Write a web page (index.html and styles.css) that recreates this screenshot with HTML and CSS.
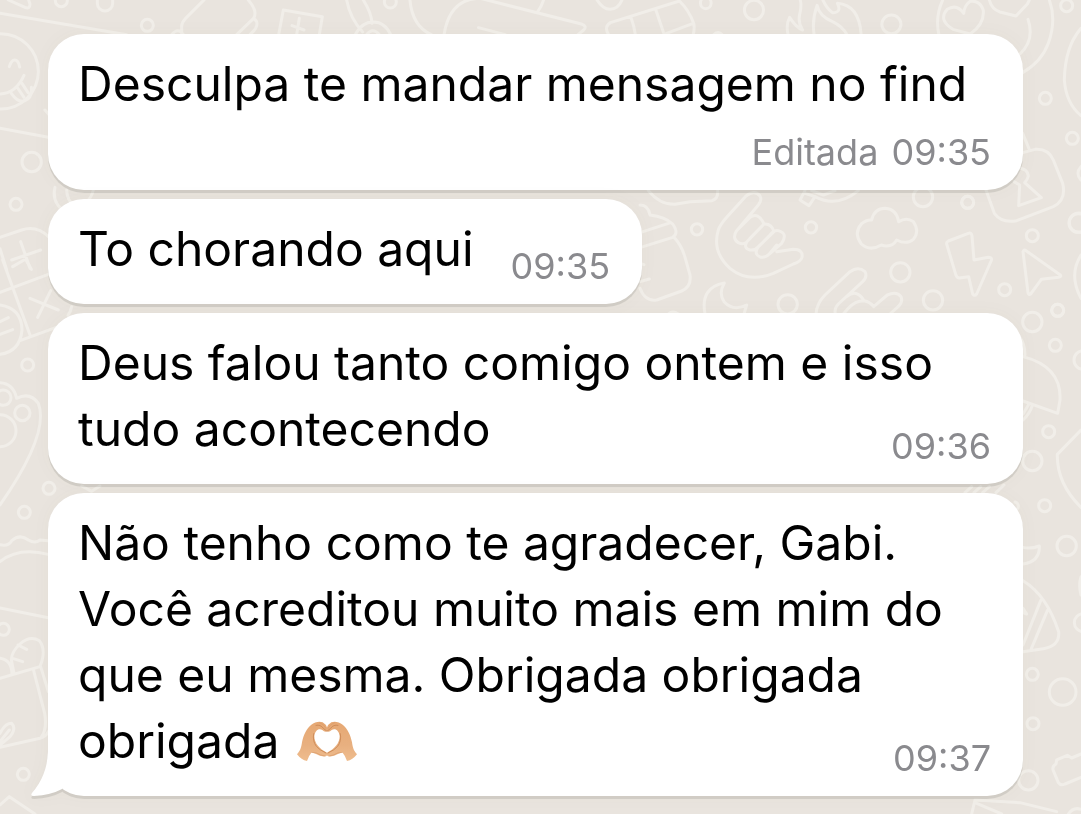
FILE: index.html
```html
<!DOCTYPE html>
<html lang="pt-BR">
<head>
    <meta charset="UTF-8">
    <meta name="viewport" content="width=device-width, initial-scale=1.0">
    <title>Conversa</title>
    <link rel="stylesheet" href="styles.css">
</head>
<body>
    <svg class="wallpaper" width="1081" height="814" viewBox="0 0 1081 814" aria-hidden="true">
        <!-- top left -->
        <g transform="scale(.33333)">
            <path d="M25 0L75 22Q90 28 90 12L86 0M0 40L380 104M0 385L145 412"/>
            <circle cx="184" cy="2" r="18"/>
            <path d="M292 0V10A23 23 0 0 0 338 10V0"/>
            <circle cx="442" cy="76" r="18"/>
            <circle cx="2" cy="214" r="113"/>
            <path d="M28 200Q34 180 44 180Q55 180 59 201M0 282Q48 280 72 226M34 280Q55 310 75 302Q98 292 94 262M53 264L72 292M66 250L84 278M135 330L148 345"/>
            <circle cx="95" cy="486" r="29"/>
            <circle cx="48" cy="613" r="18"/>
            <path d="M165 562Q155 600 185 628M200 570Q200 600 225 620M280 570Q275 590 265 600"/>
            <path d="M545 104V78Q545 68 556 56L612 0M745 0Q775 35 760 56L710 104M762 56Q780 68 762 92L750 104M515 104Q535 80 550 104M836 104L850 30L967 50L958 104M898 55L890 104M876 77L912 90M1040 0Q1050 55 1088 96M1090 0Q1115 40 1116 70M1066 104Q1085 66 1120 66Q1155 66 1172 104M1100 104Q1118 80 1138 104"/>
            <circle cx="1171" cy="6" r="18"/>
            <path d="M0 712L65 690Q110 675 148 712M0 746L20 810M35 780L122 750M62 725L90 805"/>
        </g>
        <!-- top middle -->
        <g transform="translate(400 0) scale(.3827 .33333)">
            <path d="M26 0Q32 78 82 104M115 104Q130 -5 210 -5L474 72Q490 78 480 90L465 104M375 0Q370 20 358 38M205 83L275 104M515 0Q530 28 549 28Q570 28 580 0M545 104Q532 80 550 68L730 3Q755 30 768 72Q770 90 766 104M603 50Q612 78 615 104M668 28L688 96M688 104L766 70M820 104Q832 92 842 104M1046 0Q1050 20 1044 45Q1040 70 1052 90Q1035 82 1018 52Q1008 74 1014 104M1082 104Q1076 60 1090 16Q1095 48 1130 65Q1155 78 1168 104M1105 0Q1115 25 1130 38Q1155 38 1143 10Q1200 15 1205 104M1418 0Q1398 50 1408 104M1473 40Q1455 10 1430 28Q1405 60 1445 88L1490 102Q1528 72 1524 30Q1515 0 1490 4Q1475 15 1473 40"/>
            <ellipse cx="799" cy="9" rx="14" ry="17"/>
            <ellipse cx="925" cy="30" rx="25" ry="29"/>
            <ellipse cx="1284" cy="73" rx="25" ry="28"/>
        </g>
        <!-- top right -->
        <g transform="translate(940 0) scale(.33333)">
            <path d="M148 0Q155 28 180 36L228 48L262 12L268 0M328 0Q350 60 325 130Q305 185 248 218M264 58Q285 120 240 162M423 85Q375 140 373 240Q378 310 423 347"/>
            <circle cx="380" cy="17" r="18"/>
            <circle cx="316" cy="295" r="18"/>
            <circle cx="397" cy="415" r="18"/>
            <circle cx="440" cy="520" r="26"/>
            <circle cx="417" cy="668" r="29"/>
            <circle cx="277" cy="707" r="18"/>
            <circle cx="83" cy="607" r="18"/>
            <path d="M248 400L267 446M240 460L285 448Q325 445 340 480L368 550Q380 600 340 620L230 662Q185 670 163 640L138 570M235 505Q262 505 265 528Q262 540 254 548L304 593L236 617L239 555L222 545"/>
        </g>
        <!-- between the short message and the right edge -->
        <g transform="translate(640 180) scale(.33333)">
            <path d="M25 32Q60 75 105 73L150 65L215 62Q235 58 233 32M0 75Q25 75 30 105Q75 110 98 132Q118 160 98 172L0 203M0 158L92 128M102 172Q125 195 136 235L150 285Q155 320 125 333L50 360Q15 365 0 325M0 305L28 297M0 250L12 254"/>
            <circle cx="171" cy="148" r="17"/>
            <path d="M318 48Q345 28 360 48Q367 60 355 75L290 152Q275 175 295 188Q310 195 320 186L372 132Q355 95 330 112L292 150M320 186Q310 205 330 210Q345 212 355 200L402 155Q395 130 372 132L330 175M355 200Q340 222 360 231Q375 235 388 222L425 190Q445 160 415 152Q402 150 390 165L358 198M410 195L388 222M410 215L460 208Q490 208 486 232Q482 245 460 252L400 280Q325 310 270 265Q215 215 235 150Q240 135 260 112L318 48"/>
            <path d="M495 32L480 60L507 77L525 50L495 40M515 32L550 45L585 32M525 50Q590 85 655 32"/>
            <circle cx="513" cy="142" r="17"/>
            <path d="M695 120Q703 85 736 85Q770 88 776 125Q800 110 820 125Q840 155 820 178Q800 195 770 180Q755 205 724 195Q690 215 664 192Q640 160 664 132Q680 118 695 120Z"/>
            <circle cx="849" cy="51" r="29"/>
            <circle cx="983" cy="67" r="18"/>
            <circle cx="781" cy="277" r="29"/>
            <circle cx="879" cy="361" r="29"/>
            <circle cx="443" cy="373" r="29"/>
            <path d="M195 402Q180 322 253 309Q235 340 252 365Q280 395 320 375L312 402M85 402Q98 390 115 402M528 402Q530 370 555 345L630 275Q655 258 675 275Q683 290 668 305L595 372Q582 385 586 402M620 350Q650 325 672 362Q690 365 701 380L742 345Q770 333 783 350Q790 368 772 382L750 402M672 362Q645 362 625 385L610 402"/>
            <path d="M925 183L985 160Q995 157 996 168L1002 240L1045 232Q1060 232 1052 246L1010 342Q1004 350 998 342L986 290L958 294Q951 294 948 286L920 192Q919 186 925 183Z"/>
            <path d="M1158 212L1260 284Q1266 290 1256 292L1204 298L1172 342Q1166 346 1164 338L1149 215Q1151 207 1158 212Z"/>
            <circle cx="1094" cy="329" r="18"/>
            <circle cx="1253" cy="391" r="18"/>
            <circle cx="1315" cy="129" r="28"/>
            <path d="M1323 225Q1285 285 1323 355"/>
        </g>
        <!-- right edge, middle -->
        <g transform="translate(960 270) scale(.33333)">
            <circle cx="217" cy="156" r="29"/>
            <circle cx="293" cy="121" r="18"/>
            <circle cx="286" cy="226" r="18"/>
            <circle cx="370" cy="270" r="28"/>
            <circle cx="266" cy="485" r="18"/>
            <circle cx="217" cy="573" r="29"/>
            <circle cx="254" cy="707" r="18"/>
            <circle cx="320" cy="828" r="29"/>
            <path d="M178 200Q195 220 195 255M189 260Q305 290 300 390L293 430L189 393M207 402L189 432M217 406Q210 430 189 450M363 480L292 553Q290 640 363 712M15 668L35 650M42 668L62 650M68 668L88 650M108 668L132 645M165 696Q178 700 174 715"/>
        </g>
        <!-- right edge, bottom -->
        <g transform="translate(960 540) scale(.33333)">
            <path d="M189 22Q210 28 238 18Q240 65 189 72M189 122Q260 165 296 275Q300 318 250 326L189 335M242 182L189 315M262 212L214 326M189 205L200 222L189 218M363 110Q355 135 363 165"/>
            <circle cx="370" cy="248" r="27"/>
            <circle cx="217" cy="403" r="18"/>
            <circle cx="308" cy="456" r="40"/>
            <circle cx="219" cy="551" r="18"/>
            <circle cx="205" cy="721" r="29"/>
            <path d="M363 642L335 654L322 646L290 660L288 672Q275 680 280 692L295 728Q302 738 315 732L363 712M35 822L45 780L180 788L290 815M50 790L125 822M325 822Q340 800 363 808"/>
        </g>
        <!-- left edge, middle -->
        <g transform="translate(0 260) scale(.33333)">
            <path d="M8 0L90 225M0 97L145 43M38 20L72 0M78 0L94 28M90 115L175 150M152 92L113 172M60 242L175 200M215 140Q212 155 204 166M0 135Q65 145 66 210Q60 275 0 283M0 185L25 173M0 223L38 209M0 368Q40 370 50 415Q90 395 115 430Q150 520 0 735"/>
            <circle cx="83" cy="315" r="18"/>
            <circle cx="10" cy="413" r="23"/>
            <circle cx="67" cy="459" r="23"/>
            <circle cx="0" cy="512" r="48"/>
            <circle cx="147" cy="685" r="18"/>
            <circle cx="73" cy="757" r="18"/>
            <path d="M245 678L275 694L300 678"/>
        </g>
        <!-- left edge, bottom -->
        <g transform="translate(0 520) scale(.33333)">
            <path d="M0 74Q25 80 35 62Q60 40 85 60Q105 72 120 60L145 62M0 125Q55 80 145 103M0 264L145 293M0 475L120 440Q140 390 118 362Q90 345 60 372Q30 400 35 425L42 460M0 415Q35 420 36 462M54 375L80 388M38 415L68 425M100 448L134 580Q142 625 125 650M122 440L145 515M0 682L120 655Q138 650 145 635M0 640Q15 610 35 610Q50 625 30 650L0 675M0 665L28 630M0 855L28 830L105 882"/>
            <circle cx="10" cy="328" r="18"/>
            <circle cx="70" cy="763" r="18"/>
        </g>
    </svg>

    <main class="chat">
        <div class="bubble stacked">
            <p class="text">Desculpa te mandar mensagem no find</p>
            <div class="meta"><span class="edited">Editada</span> <time>09:35</time></div>
        </div>
        <div class="bubble short">
            <p class="text">To chorando aqui</p>
            <div class="meta"><time>09:35</time></div>
        </div>
        <div class="bubble">
            <p class="text">Deus falou tanto comigo ontem e isso<br>tudo acontecendo</p>
            <div class="meta"><time>09:36</time></div>
        </div>
        <div class="bubble">
            <p class="text">Não tenho como te agradecer, Gabi.<br>Você acreditou muito mais em mim do<br>que eu mesma. Obrigada obrigada<br>obrigada
                <svg class="emoji" width="62" height="42" viewBox="48 58 186 126" role="img" aria-label="mãos em coração">
                    <defs>
                        <linearGradient id="skin" x1="0" y1="0" x2="0" y2="1">
                            <stop offset="0" stop-color="#e6a873"/>
                            <stop offset=".6" stop-color="#e8b080"/>
                            <stop offset="1" stop-color="#efbd8e"/>
                        </linearGradient>
                        <g id="hand">
                            <path fill="url(#skin)" d="M51 158C62 146 64 136 66 122C70 100 80 80 94 69C104 61 118 58 128 62Q139 68 142 80L141 89Q134 92 127 85C117 78 104 86 103 104C103 124 118 142 141 153Q146 161 136 164Q122 166 108 157L95 152Q88 160 81 178Q64 175 51 158Z"/>
                            <path fill="none" stroke="#cf8d5a" stroke-width="3" stroke-linecap="round" d="M108 71Q122 68 130 80L140 88M101 96Q97 118 109 134Q118 145 138 154"/>
                            <path fill="none" stroke="#d99a68" stroke-width="2" stroke-linecap="round" d="M95 152Q108 151 122 160L135 163M118 63Q132 66 138 80"/>
                        </g>
                    </defs>
                    <use href="#hand"/>
                    <use href="#hand" transform="translate(282 0) scale(-1 1)"/>
                </svg>
            </p>
            <div class="meta"><time>09:37</time></div>
            <svg class="tail" width="40" height="60" viewBox="0 0 40 60" aria-hidden="true">
                <path d="M17 0V16Q16 40 1 57Q-1 60 3 60Q20 59 31 53L40 30V0Z"/>
            </svg>
        </div>
    </main>
</body>
</html>
```
FILE: styles.css
```css
* {
    box-sizing: border-box;
}
body {
    margin: 0;
    min-height: 100vh;
    background: #e9e4de;
    font-family: Inter, "Liberation Sans", sans-serif;
    overflow: hidden;
}
.wallpaper {
    position: absolute;
    top: 0;
    left: 0;
    fill: none;
    stroke: #f1eee9;
    stroke-width: 3px;
    stroke-linecap: round;
    stroke-linejoin: round;
}
.wallpaper * {
    vector-effect: non-scaling-stroke;
}
.chat {
    position: relative;
    display: flex;
    flex-direction: column;
    gap: 9px;
    padding: 34px 58px 16px 48px;
}
.bubble {
    position: relative;
    display: grid;
    padding: 17px 32px 22px 30px;
    background: #fff;
    border-radius: 36px;
    filter: drop-shadow(0 3px 0 rgba(60, 60, 40, 0.12)) drop-shadow(0 0 8px rgba(60, 50, 30, 0.03));
}
.text {
    grid-area: 1 / 1;
    margin: 0;
    font-size: 48px;
    line-height: 66px;
    color: #000;
    white-space: nowrap;
}
.meta {
    grid-area: 1 / 1;
    align-self: end;
    justify-self: end;
    font-size: 36px;
    line-height: 32px;
    color: #8a8a8e;
    white-space: nowrap;
}
.edited {
    margin-right: 3px;
}
.stacked .meta {
    grid-area: 2 / 1;
    margin-top: 19px;
}
.short {
    display: flex;
    align-self: flex-start;
    gap: 37px;
}
.emoji {
    margin-left: 3px;
    vertical-align: -5px;
}
.tail {
    position: absolute;
    left: -17px;
    bottom: 0;
    fill: #fff;
}
```
